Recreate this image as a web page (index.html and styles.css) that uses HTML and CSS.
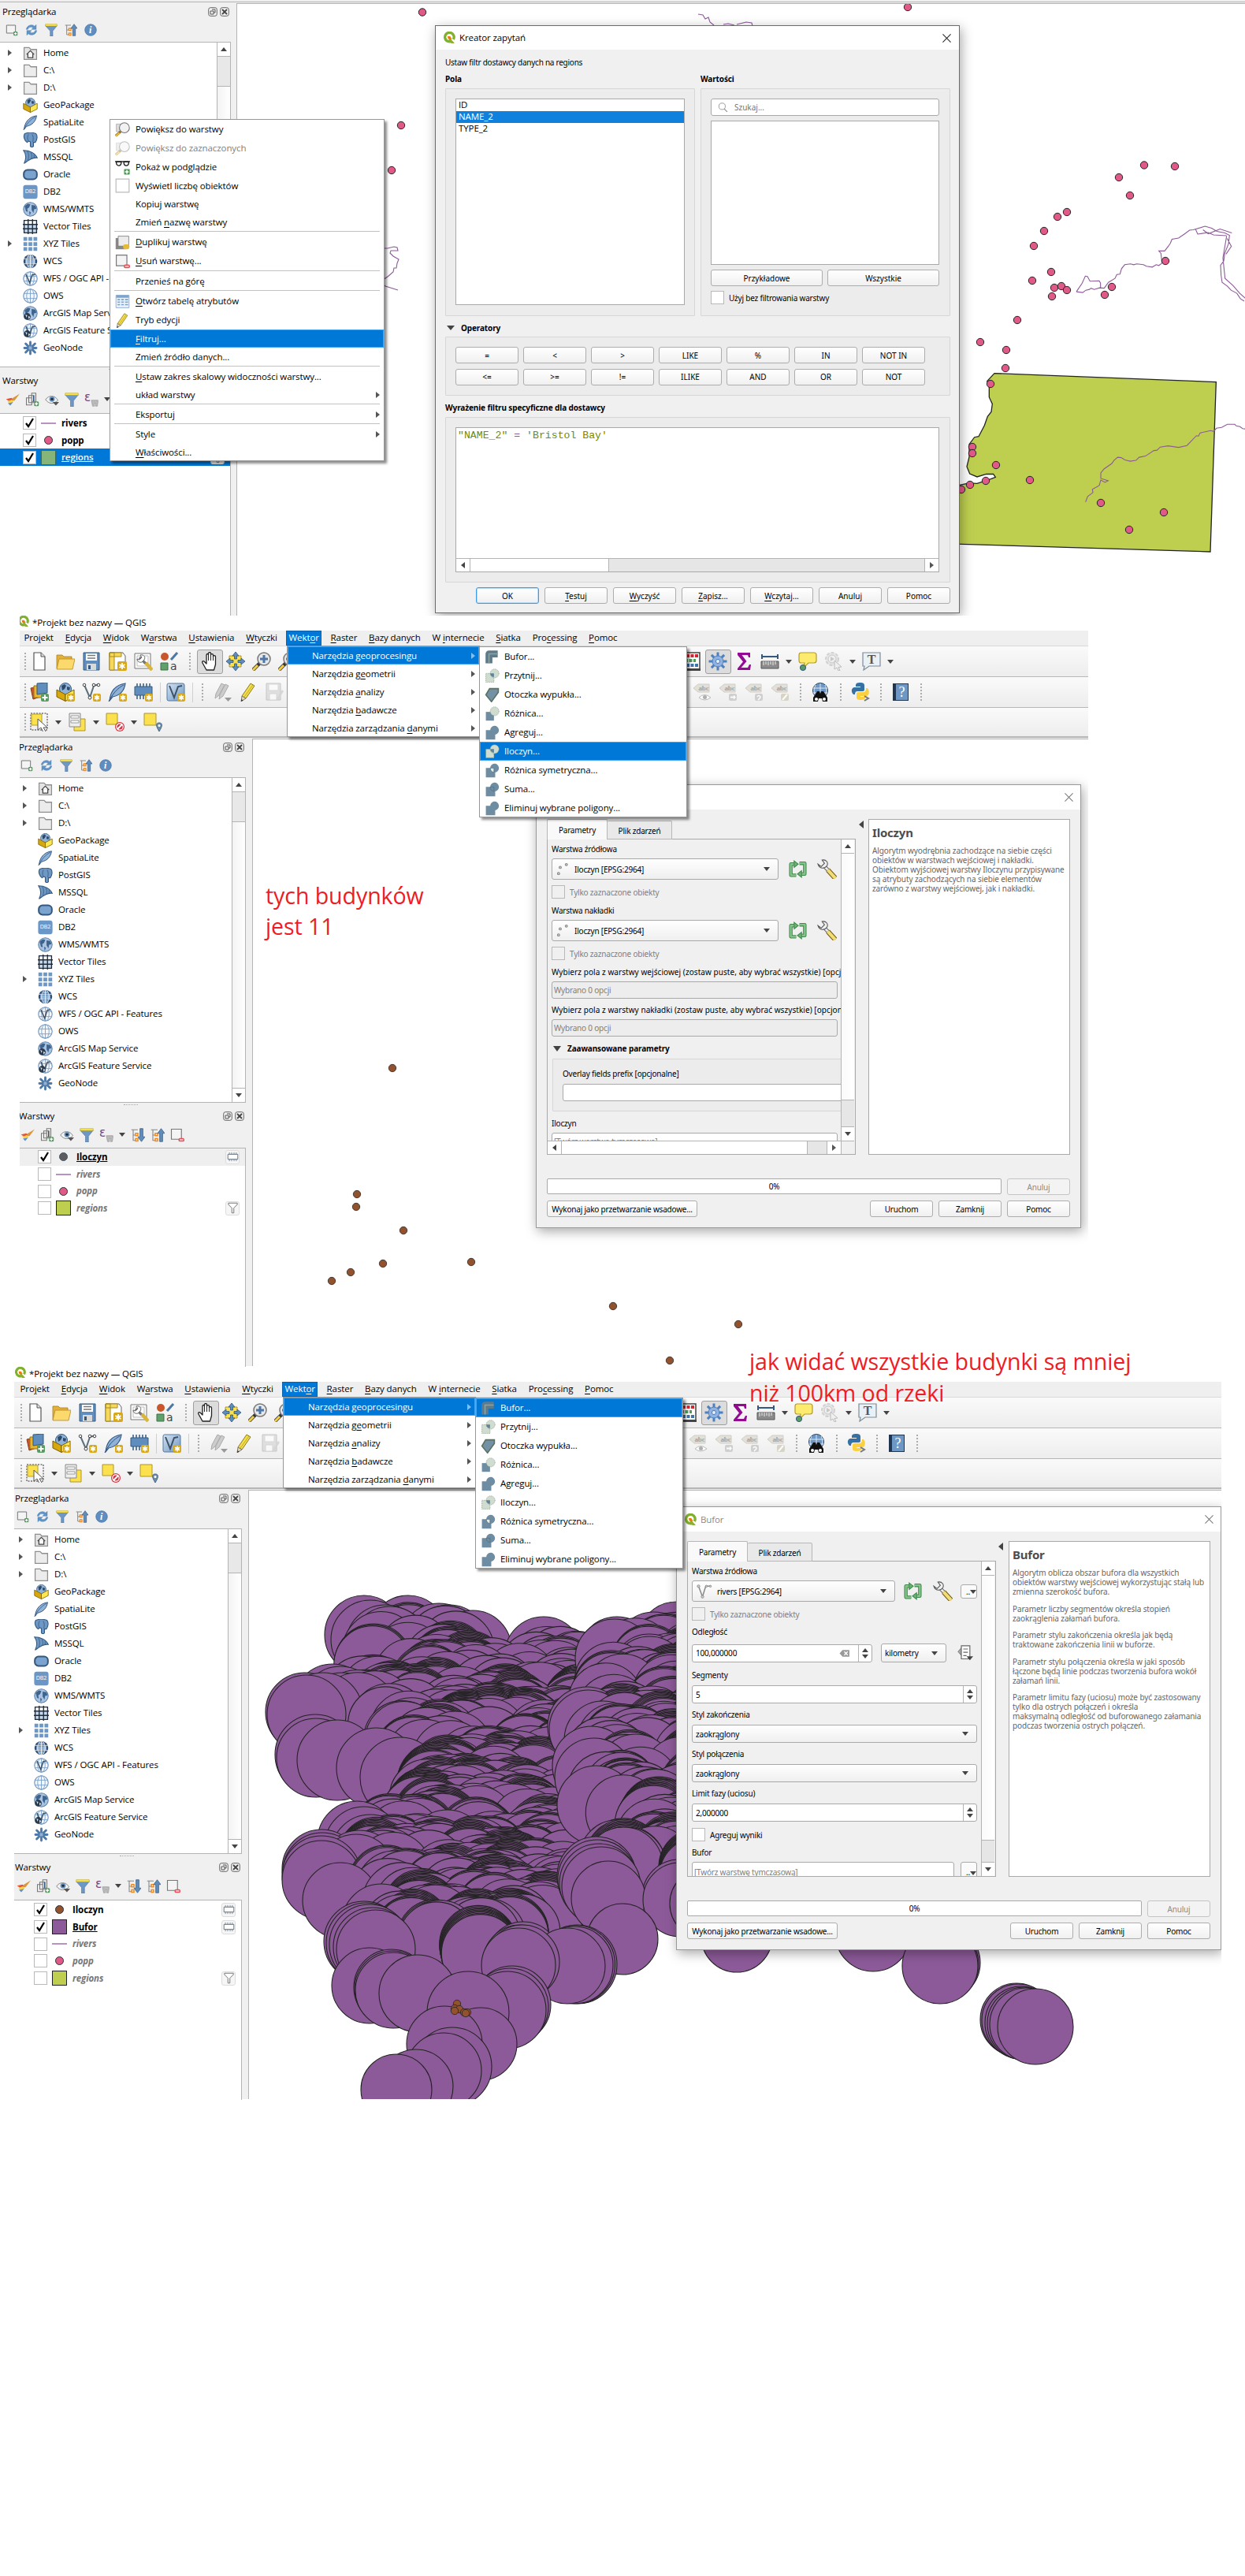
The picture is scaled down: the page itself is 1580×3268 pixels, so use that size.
FILE: index.html
```html
<!DOCTYPE html>
<html lang="pl">
<head>
<meta charset="utf-8">
<title>QGIS – analiza warstw</title>
<link rel="stylesheet" href="styles.css">
</head>
<body>
<svg class="sprite" width="0" height="0" aria-hidden="true">
  <defs>
    <linearGradient id="lg-blue" x1="0" y1="0" x2="1" y2="1"><stop offset="0" stop-color="#d5e3f2"/><stop offset="1" stop-color="#6d97c4"/></linearGradient>
    <symbol id="i-logo" viewBox="0 0 24 24"><path fill="#589632" d="M14 14l8 8h-6l-4-4z"/><path fill="none" stroke="#7fb02e" stroke-width="5" d="M17 18a8.600 8.600 0 1 1 3-3"/><path fill="#ee7913" d="M9 9h5l3 5-2 2-5-2z"/><path fill="#93b023" d="M13 13l9 9h-5l-6-6z"/></symbol>
    <symbol id="i-add" viewBox="0 0 24 24"><path fill="#f4f4f4" stroke="#777" stroke-width="1.500" d="M2 3h17v15H2z"/><rect x="15" y="15" width="8" height="8" rx="2" fill="#5a9a63"/><path stroke="#fff" stroke-width="2" d="M19 16.500v5M16.500 19h5"/></symbol>
    <symbol id="i-refresh" viewBox="0 0 24 24"><path fill="#5f94cb" stroke="#4576a9" stroke-width=".6" d="M2 11C3 3 13 0 18 5l3-3v9h-9l3-3C11 5 6 7 5 11zM22 13c-1 8-11 11-16 6l-3 3v-9h9l-3 3c4 3 9 1 10-3z"/></symbol>
    <symbol id="i-funnel" viewBox="0 0 24 24"><path fill="#6d97c4" stroke="#4b7099" stroke-width=".8" d="M1 4h22l-8 10v10h-5V14z"/><path fill="#fce94f" stroke="#b9a11d" stroke-width=".8" d="M1 1h22v3.500H1z"/></symbol>
    <symbol id="i-up" viewBox="0 0 24 24"><path fill="none" stroke="#888" stroke-width="1.500" d="M1 3h11M4 3v18h4M4 12h4"/><path fill="#fff" stroke="#f08a1c" stroke-width="2" d="M8 9h4v4H8zM8 18h4v4H8z"/><path fill="#5f8dbd" stroke="#35597e" stroke-width="1" d="M18 1l6 8h-3.500v14h-5V9H12z"/></symbol>
    <symbol id="i-down" viewBox="0 0 24 24"><path fill="none" stroke="#888" stroke-width="1.500" d="M1 3h11M4 3v18h4M4 12h4"/><path fill="#fff" stroke="#f08a1c" stroke-width="2" d="M8 9h4v4H8zM8 18h4v4H8z"/><path fill="#5f8dbd" stroke="#35597e" stroke-width="1" d="M18 23l6-8h-3.500V1h-5v14H12z"/></symbol>
    <symbol id="i-info" viewBox="0 0 24 24"><circle cx="12" cy="12" r="11" fill="#5f8dc0" stroke="#456f9e"/><text x="9" y="18" font-family="Liberation Serif" font-style="italic" font-weight="bold" font-size="18" fill="#fff">i</text></symbol>
    <symbol id="i-folder" viewBox="0 0 24 24"><path fill="#ececec" stroke="#8f8f8f" stroke-width="1.600" d="M2 3h8l3 3h9v16H2z"/></symbol>
    <symbol id="i-home" viewBox="0 0 24 24"><path fill="#e4e4e4" stroke="#8f8f8f" stroke-width="1.600" d="M2 3h8l3 3h9v16H2z"/><path fill="#fff" stroke="#444" stroke-width="1.600" d="M6 14l6-6 6 6M8 13v6h8v-6"/></symbol>
    <symbol id="i-gpkg" viewBox="0 0 24 24"><circle cx="12" cy="8" r="7.500" fill="#8fb2d8" stroke="#35597e"/><path fill="#2e4a68" d="M7 4l4-2 2 2-2 4-3 2zM14 5l4 1-1 4-3-1z"/><path fill="#d7a80c" stroke="#7b5d00" d="M1 9l11 6v8.500L1 18z"/><path fill="#fce94f" stroke="#7b5d00" d="M23 9l-11 6v8.500L23 18z"/></symbol>
    <symbol id="i-feather" viewBox="0 0 24 24"><path fill="#8fb2d8" stroke="#2f5580" stroke-width="1.200" d="M2 23C3 12 9 3 22 1c-1 8-6 15-16 17z"/><path fill="none" stroke="#2f5580" d="M1 24C6 14 12 7 20 3"/></symbol>
    <symbol id="i-elephant" viewBox="0 0 24 24"><path fill="#6d97c4" stroke="#35597e" stroke-width="1.400" d="M3 2c5-2 13-2 18 0 3 3 2 10-1 14h-3v6c-1 2-4 2-5 0v-7l-3-1-2 2C3 14 0 6 3 2z"/><path fill="none" stroke="#35597e" d="M9 3c-2 4-2 8 0 11M15 3c2 4 2 7 1 12"/></symbol>
    <symbol id="i-sail" viewBox="0 0 24 24"><path fill="#6d97c4" stroke="#35597e" stroke-width="1.400" d="M1 1c9 0 19 4 22 12-7-1-13 3-21 9 4-8 4-14-1-21z"/><path fill="none" stroke="#35597e" d="M7 2c3 5 3 10 1 15M13 5c2 4 2 7 0 10M18 8v5"/></symbol>
    <symbol id="i-oracle" viewBox="0 0 24 24"><rect x="1.500" y="4.500" width="21" height="15" rx="6" fill="#7aa3d0" stroke="#35597e" stroke-width="2.600"/></symbol>
    <symbol id="i-db2" viewBox="0 0 24 24"><rect x=".5" y="1" width="23" height="22" rx="4" fill="#6a97c8"/><text x="12" y="14.500" text-anchor="middle" font-family="Open Sans" font-size="9" fill="#fff">DB2</text></symbol>
    <symbol id="i-wms" viewBox="0 0 24 24"><circle cx="12" cy="12" r="11" fill="#a9c4e2" stroke="#5b80a8" stroke-width="1.300"/><path fill="#3e648e" d="M3 7l5-4 4 1-2 5-3 2 1 5-3-1zM14 5l6 1 2 5-4 1-1 6-3-5zM10 15l3 2-2 5z"/></symbol>
    <symbol id="i-grid" viewBox="0 0 24 24"><path fill="#fff" d="M2 2h20v20H2z"/><path fill="#c5d7ea" d="M2 9h20v13H2z"/><path fill="none" stroke="#1d2b3c" stroke-width="1.700" d="M2 2h20v20H2zM8.500 0v24M15.500 0v24M0 8.500h24M0 15.500h24"/></symbol>
    <symbol id="i-tiles" viewBox="0 0 24 24"><path fill="#6d97c4" d="M1 1h6v6H1zM9 1h6v6H9zM17 1h6v6h-6zM1 9h6v6H1zM9 9h6v6H9zM17 9h6v6h-6zM1 17h6v6H1zM9 17h6v6H9zM17 17h6v6h-6z"/></symbol>
    <symbol id="i-wcs" viewBox="0 0 24 24"><circle cx="12" cy="12" r="11" fill="#2f4f74"/><path fill="#8fb2d8" d="M4 9h16v6H4zM8 3h8v4H8zM8 17h8v4H8z"/><path fill="none" stroke="#fff" d="M12 1v22M1.500 8h21M1.500 16h21"/><ellipse cx="12" cy="12" rx="6" ry="11" fill="none" stroke="#fff"/></symbol>
    <symbol id="i-ows" viewBox="0 0 24 24"><circle cx="12" cy="12" r="11" fill="#f4f8fc" stroke="#6a93bf" stroke-width="1.400"/><path fill="none" stroke="#7ea3cb" stroke-width="1.200" d="M12 1v22M1.500 8h21M1.500 16h21"/><ellipse cx="12" cy="12" rx="6" ry="11" fill="none" stroke="#7ea3cb" stroke-width="1.200"/></symbol>
    <symbol id="i-wfs" viewBox="0 0 24 24"><use href="#i-ows"/><path fill="none" stroke="#44566a" stroke-width="2" d="M5 5l6 14 4-13 5-1"/></symbol>
    <symbol id="i-agm" viewBox="0 0 24 24"><use href="#i-wms"/><circle cx="7" cy="17" r="5.500" fill="#2b3b4e"/><path fill="#dfe8f2" d="M4 14l3 1-1 4zM9 16l3 2-3 3z"/></symbol>
    <symbol id="i-agf" viewBox="0 0 24 24"><use href="#i-wfs"/><circle cx="7" cy="17" r="5.500" fill="#2b3b4e"/><path fill="#dfe8f2" d="M4 14l3 1-1 4zM9 16l3 2-3 3z"/></symbol>
    <symbol id="i-node" viewBox="0 0 24 24"><path fill="none" stroke="#4f79a8" stroke-width="3.600" stroke-linecap="round" d="M12 2.500v6M12 15.500v6M2.500 12h6M15.500 12h6M4.500 5l4 4M15.500 15l4 4M19.500 5l-4 4M8.500 15l-4 4"/><circle cx="12" cy="12" r="2.500" fill="#8fb2d8"/></symbol>
    <symbol id="i-brush" viewBox="0 0 24 24"><path fill="#d8973b" d="M24 2l-9 12-4-4z"/><path fill="#e8542f" d="M1 11l9-2 4 4-4 5z"/><path fill="#f8d24a" d="M3 15l8-3 3 2-5 6z"/><path fill="#5b90cf" d="M4 18l6-1 3-1-5 6z"/></symbol>
    <symbol id="i-group" viewBox="0 0 24 24"><path fill="#eee" stroke="#777" stroke-width="1.400" d="M2 9h9v12H2zM6 5h9v12H6zM11 1h7v14h-7z"/><path stroke="#35597e" stroke-width="1.500" d="M14 5v10"/><rect x="15" y="15" width="8" height="8" rx="2" fill="#5a9a63"/><path stroke="#fff" stroke-width="2" d="M19 16.500v5M16.500 19h5"/></symbol>
    <symbol id="i-eye" viewBox="0 0 24 24"><path fill="#f2f2f2" stroke="#888" stroke-width="1.300" d="M1 12C6 4 17 4 22 13c-7 7-15 7-21-1z"/><circle cx="12" cy="11" r="4.500" fill="#5f8dbd"/><circle cx="12" cy="11" r="2" fill="#222"/><path fill="#555" d="M13 16h11l-5.500 6z"/></symbol>
    <symbol id="i-eps" viewBox="0 0 24 24"><text x="0" y="15" font-family="DejaVu Sans" font-size="20" fill="#74477f">ε</text><path fill="#bbb" stroke="#999" d="M12 13h11v3l-1 7h-3v-5h-2v5h-3z"/></symbol>
    <symbol id="i-remove" viewBox="0 0 24 24"><path fill="#f4f4f4" stroke="#777" stroke-width="1.500" d="M2 2h17v17H2z"/><rect x="14" y="17" width="10" height="6" rx="2.500" fill="#e5525a"/><path stroke="#fff" stroke-width="1.600" d="M16 20h6"/></symbol>
    <symbol id="i-new" viewBox="0 0 24 24"><path fill="#fff" stroke="#555" stroke-width="1.200" d="M5 1h9l5 5v17H5z"/><path fill="#ddd" stroke="#555" d="M14 1v5h5"/></symbol>
    <symbol id="i-open" viewBox="0 0 24 24"><path fill="#e3b13a" stroke="#a87f1c" stroke-width=".8" d="M1 4h7l2 2h10v15H1z"/><path fill="#fbd96c" stroke="#b58c25" stroke-width=".8" d="M4 9h20l-3 13H1z"/></symbol>
    <symbol id="i-save" viewBox="0 0 24 24"><path fill="#5f8dbd" stroke="#35597e" d="M2 1h20v22H2z"/><path fill="#fff" d="M5 2h14v9H5z"/><path stroke="#777" stroke-width="1.400" d="M7 4.500h10M7 8h10"/><path fill="#d9d9d9" d="M6 15h12v8H6z"/><path fill="#35597e" d="M8 17h3v5H8z"/></symbol>
    <symbol id="i-layout" viewBox="0 0 24 24"><path fill="#fff" stroke="#666" d="M2 1h17l3 4v18H2z"/><path fill="#f6d95b" stroke="#a88b1c" d="M2 1h6v22H2zM2 1h15v5H2z"/><rect x="12" y="12" width="12" height="12" rx="2" fill="#d6a81a"/><path stroke="#fff" stroke-width="1.800" d="M18 14v8M14.500 16l7 4M21.500 16l-7 4"/></symbol>
    <symbol id="i-tools" viewBox="0 0 24 24"><path fill="#fff" stroke="#777" d="M1 2h20v19H1z"/><path fill="none" stroke="#bbb" d="M4 5h14v13H4z"/><path stroke="#777" stroke-width="3.400" d="M7 7l8 8"/><path fill="#fff" stroke="#666" d="M4 9l3 1 3-3-2-3c5-1 7 3 5 6l-3 3c-3 1-6-1-6-4z"/><path stroke="#d9b53a" stroke-width="4.500" d="M15 14l8 9"/></symbol>
    <symbol id="i-style" viewBox="0 0 24 24"><circle cx="6" cy="6" r="5" fill="#c9562c"/><path stroke="#4c77a6" stroke-width="3" d="M22 1l-8 9"/><path fill="#5fa06b" stroke="#3f7149" d="M1 14h9v9H1z"/><text x="13" y="23" font-family="DejaVu Sans" font-size="14" fill="#444">a</text></symbol>
    <symbol id="i-hand" viewBox="0 0 24 24"><path fill="#fff" stroke="#222" stroke-width="1.300" stroke-linejoin="round" d="M8 23l-5-9c-1-2 1-3 2-2l3 3V4c0-2 2.500-2 2.500 0V2c0-2 3-2 3 0v2c0-2 3-1.500 3 0v2c0-2 3-1.500 3 0v10l-2 7z"/><path stroke="#222" d="M10.500 4v7M13.500 4v7M16.500 5v6"/></symbol>
    <symbol id="i-pan" viewBox="0 0 24 24"><path fill="#fbe14d" stroke="#b0962b" d="M4 5h15v14H4z"/><path fill="#5f8dbd" stroke="#35597e" stroke-width=".8" d="M12 0l4 5h-2.500v4h-3V5H8zM12 24l4-5h-2.500v-4h-3v4H8zM0 12l5-4v2.500h4v3H5V16zM24 12l-5-4v2.500h-4v3h4V16z"/></symbol>
    <symbol id="i-zoomin" viewBox="0 0 24 24"><path stroke="#333" stroke-width="4.500" d="M1 23l9-9"/><path stroke="#f2cf45" stroke-width="3" d="M1 23l6-6"/><circle cx="15" cy="9" r="8" fill="#e7e7e7" stroke="#777" stroke-width="1.500"/><path stroke="#4c77a6" stroke-width="3" d="M15 4v10M10 9h10"/></symbol>
    <symbol id="i-zoomout" viewBox="0 0 24 24"><path stroke="#333" stroke-width="4.500" d="M1 23l9-9"/><path stroke="#f2cf45" stroke-width="3" d="M1 23l6-6"/><circle cx="15" cy="9" r="8" fill="#e7e7e7" stroke="#777" stroke-width="1.500"/><path stroke="#4c77a6" stroke-width="3" d="M10 9h10"/></symbol>
    <symbol id="i-abacus" viewBox="0 0 24 24"><path fill="#fff" stroke="#444" stroke-width="1.500" d="M2 1h20v22H2z"/><path stroke="#d3262e" stroke-width="4" stroke-dasharray="4 1.500" d="M5 5h16"/><path stroke="#4f9a58" stroke-width="4" stroke-dasharray="4 1.500" d="M3 11h14"/><path stroke="#4173ab" stroke-width="4" stroke-dasharray="4 1.500" d="M5 17h16"/><path stroke="#444" stroke-width="3" d="M1 22.500h22"/></symbol>
    <symbol id="i-gear" viewBox="0 0 24 24"><g stroke="#4d80bd" stroke-width="3"><path d="M12 .5v23M.5 12h23M3.900 3.900l16.200 16.200M20.100 3.900L3.900 20.100"/></g><circle cx="12" cy="12" r="7" fill="#8fb2e2" stroke="#4d80bd"/><circle cx="12" cy="12" r="2.600" fill="#e7edf5" stroke="#4d80bd"/></symbol>
    <symbol id="i-sigma" viewBox="0 0 24 24"><path fill="#930a93" d="M4 1h16v6h-2l-1-3H9.500l6 8-7 8H17l2-4h2l-1 7H4v-2l7-8.500L4 4z"/></symbol>
    <symbol id="i-ruler" viewBox="0 0 24 24"><path stroke="#35597e" stroke-width="2" d="M2 6h20M2 3v6M22 3v6"/><path fill="#8c8c8c" stroke="#555" d="M1 12h22v9H1z"/><path stroke="#eee" d="M4 12v5M7 12v4M10 12v5M13 12v4M16 12v5M19 12v4"/></symbol>
    <symbol id="i-tip" viewBox="0 0 24 24"><path fill="#fdeb6e" stroke="#b39b29" stroke-width="1.200" d="M4 1h16q3 0 3 3v7q0 3-3 3h-7l-6 6 1-6H4q-3 0-3-3V4q0-3 3-3z"/><circle cx="6" cy="20" r="3.600" fill="#5a9a63" stroke="#35597e"/></symbol>
    <symbol id="i-click" viewBox="0 0 24 24"><g opacity=".6"><circle cx="10" cy="9" r="8" fill="#ddd" stroke="#bbb" stroke-width="2" stroke-dasharray="4 2"/><circle cx="10" cy="9" r="5" fill="#eee" stroke="#aaa"/><path fill="#aaa" d="M8 6l5 3-5 3z"/><path fill="#eee" stroke="#999" d="M13 11l9 8-4 .5 2 4-2 .5-2-4-3 2z"/></g></symbol>
    <symbol id="i-text" viewBox="0 0 24 24"><path fill="#eaf1f6" stroke="#7c8c98" stroke-width="1.200" d="M1 1h22v17H9l-7 5 1-5H1z"/><text x="12" y="15" text-anchor="middle" font-family="Liberation Serif" font-weight="bold" font-size="16" fill="#555">T</text></symbol>
    <symbol id="i-star" viewBox="0 0 24 24"><rect x="14" y="14" width="10" height="10" rx="2" fill="#d6a81a"/><path stroke="#fff" stroke-width="1.600" d="M19 15.500v7M16 17.200l6 3.600M22 17.200l-6 3.600"/></symbol>
    <symbol id="i-source" viewBox="0 0 24 24"><path fill="#c9562c" stroke="#8e3a1a" d="M1 7l9-2 3 13-9 3z"/><path fill="#e8b52c" stroke="#9a7510" d="M5 4h12v15H5z"/><path fill="#5f8dbd" stroke="#35597e" d="M9 1l13-1v13l-13 2z"/><rect x="14" y="14" width="10" height="10" rx="2" fill="#5a9a63"/><path stroke="#fff" stroke-width="2" d="M19 15.500v7M15.500 19h7"/></symbol>
    <symbol id="i-gpkgnew" viewBox="0 0 24 24"><use href="#i-gpkg"/><use href="#i-star"/></symbol>
    <symbol id="i-shpnew" viewBox="0 0 24 24"><path fill="none" stroke="#5c6f7c" stroke-width="2" d="M3 3l7 16 5-15 7-2"/><g fill="#fff" stroke="#444"><circle cx="3" cy="3" r="1.800"/><circle cx="10" cy="19" r="2"/><circle cx="15" cy="3" r="1.800"/><circle cx="21" cy="3" r="1.800"/></g><use href="#i-star"/></symbol>
    <symbol id="i-slnew" viewBox="0 0 24 24"><use href="#i-feather"/><use href="#i-star"/></symbol>
    <symbol id="i-memnew" viewBox="0 0 24 24"><path stroke="#35597e" stroke-width="1.500" d="M4 1v20M8 1v20M12 1v20M16 1v20M20 1v20"/><path fill="#5f8dbd" stroke="#35597e" d="M1 5h22v11H1z"/><use href="#i-star"/></symbol>
    <symbol id="i-virtnew" viewBox="0 0 24 24"><rect x="1" y="1" width="22" height="22" rx="2" fill="url(#lg-blue)" stroke="#5478a0"/><path fill="none" stroke="#3c5166" stroke-width="2" d="M4 4l6 15 5-14 5-1"/><use href="#i-star"/></symbol>
    <symbol id="i-pencils" viewBox="0 0 24 24"><g fill="#ccc" stroke="#aaa"><path d="M3 20l1-6 7-13 4 2-7 13z"/><path d="M8 21l1-6 7-13 4 2-7 13z"/></g><path fill="#999" d="M15 19h9l-4.500 5z"/></symbol>
    <symbol id="i-pencil" viewBox="0 0 24 24"><path fill="#f3dd4c" stroke="#8a7a1e" d="M4 17L15 1l5 3L9 20z"/><path stroke="#c2ab28" d="M7 18L18 3"/><path fill="#e8d6a8" stroke="#777" d="M4 17l5 3-6 4z"/><path fill="#333" d="M3 24l.4-3 2.200 1.400z"/></symbol>
    <symbol id="i-savegrey" viewBox="0 0 24 24"><g opacity=".5"><path fill="#ccc" stroke="#999" d="M2 1h18v21H2z"/><path fill="#fff" stroke="#bbb" d="M5 2h12v8H5zM6 14h9v8H6z"/><path fill="#bbb" d="M14 22l8-13 2 2-8 12z"/></g></symbol>
    <symbol id="i-tag" viewBox="0 0 24 24"><path fill="#dcdad0" stroke="#c3c1b8" d="M1 7l6-5h14v10H7z"/><text x="14" y="10" text-anchor="middle" font-family="Liberation Serif" font-size="9" font-weight="bold" fill="#888">abc</text></symbol>
    <symbol id="i-abcmove" viewBox="0 0 24 24"><g opacity=".75"><use href="#i-tag"/><rect x="13" y="14" width="10" height="9" rx="2" fill="#c4c4c4"/><path fill="#fff" d="M15 17.500h4v-2l3 3-3 3v-2h-4z"/></g></symbol>
    <symbol id="i-abcrot" viewBox="0 0 24 24"><g opacity=".75"><use href="#i-tag"/><rect x="13" y="14" width="10" height="9" rx="2" fill="#c4c4c4"/><path fill="none" stroke="#fff" stroke-width="1.600" d="M16 18q2-3 4 0 0 2-3 4"/></g></symbol>
    <symbol id="i-abcedit" viewBox="0 0 24 24"><g opacity=".75"><use href="#i-tag"/><rect x="13" y="14" width="10" height="9" rx="2" fill="#cfcbb8"/><path stroke="#fff" stroke-width="2" d="M15 22l6-7"/></g></symbol>
    <symbol id="i-abceye" viewBox="0 0 24 24"><g opacity=".75"><use href="#i-tag"/><path fill="#fff" stroke="#aaa" d="M8 19q7-7 15 0-8 6-15 0z"/><circle cx="15.500" cy="18.500" r="2.500" fill="#999"/></g></symbol>
    <symbol id="i-binoc" viewBox="0 0 24 24"><circle cx="12" cy="10" r="9.500" fill="#6d97c4" stroke="#26415f"/><path fill="none" stroke="#dfe9f4" d="M12 1v18M3 7h18M3 13h18M6 3q-4 7 0 14M18 3q4 7 0 14"/><path fill="#111" d="M8 11h3l1 3 1-3h3l5 8v5h-6l-1-4h-4l-1 4H3v-5z"/><circle cx="7" cy="21" r="2" fill="#fff"/><circle cx="17" cy="21" r="2" fill="#fff"/></symbol>
    <symbol id="i-python" viewBox="0 0 24 24"><path fill="#3571a3" d="M11 0c5 0 6 1 6 4v5q0 2-3 2H8q-3 0-3 4H3c-3-3-3-8 1-9h8V5H6V3q0-3 5-3z"/><path fill="#fbd03f" d="M13 22c-5 0-6-1-6-4v-4q0-2 3-2h6q3 0 3-5h2c3 4 2 9-1 10h-8v1h6v1q0 3-5 3z"/><path fill="none" stroke="#777" stroke-width="2" d="M17 17l5 3-5 3"/></symbol>
    <symbol id="i-help" viewBox="0 0 24 24"><path fill="#1f3550" d="M2 1h20v22H2z"/><path fill="#6d97c4" d="M6 2h15v20H6z"/><text x="13.500" y="18" text-anchor="middle" font-family="Liberation Serif" font-size="18" fill="#fff">?</text></symbol>
    <symbol id="i-select" viewBox="0 0 24 24"><path fill="none" stroke="#333" stroke-dasharray="2 1.500" d="M1 1h21v21H1z"/><path fill="#fbe14d" stroke="#b8a12b" d="M2 2h13v14H2z"/><path fill="#fff" stroke="#555" d="M10 8l12 11h-5l3 5-3 1-3-6-4 3z"/></symbol>
    <symbol id="i-form" viewBox="0 0 24 24"><path fill="#fbe14d" stroke="#b0962b" d="M8 8h14v15H8z"/><path fill="#eee" stroke="#888" d="M2 1h14v17H2z"/><path fill="#fff" stroke="#999" d="M4 4h10v3H4zM4 10h10v3H4z"/></symbol>
    <symbol id="i-desel" viewBox="0 0 24 24"><path fill="#fbe14d" stroke="#b0962b" d="M1 1h14v14H1z"/><circle cx="18" cy="18" r="6" fill="#d9333f"/><path stroke="#fff" stroke-width="2" d="M15 21l6-6"/><circle cx="18" cy="18" r="4.200" fill="none" stroke="#fff" stroke-width="1.200"/></symbol>
    <symbol id="i-selloc" viewBox="0 0 24 24"><path fill="#fbe14d" stroke="#b0962b" d="M1 1h15v15H1z"/><path fill="#6d8ca8" stroke="#486680" d="M20 24c-5-8-4-11 0-11s5 3 0 11z"/><circle cx="20" cy="16.500" r="1.500" fill="#fff"/></symbol>
    <symbol id="i-bufor" viewBox="0 0 24 24"><path fill="none" stroke="#5d7b8c" stroke-width="11" stroke-linejoin="round" d="M7 22V7h14"/><path fill="none" stroke="#8fa39a" stroke-width="2" d="M7 22V7h14"/></symbol>
    <symbol id="i-clip" viewBox="0 0 24 24"><path fill="#cfdccf" stroke="#7c9a80" stroke-dasharray="1.500 1.500" d="M2 8h13v14H2z"/><circle cx="16" cy="8" r="7" fill="#cfdccf" stroke="#7c9a80" stroke-dasharray="1.500 1.500"/><path fill="#5f8299" d="M9 8h6v6q-6-1-6-6z"/></symbol>
    <symbol id="i-hull" viewBox="0 0 24 24"><path fill="#7390a5" stroke="#5a7161" stroke-width="2" d="M8 2h14v6L11 23 2 12z"/></symbol>
    <symbol id="i-diff" viewBox="0 0 24 24"><path fill="#6f8da2" d="M2 9h13v14H2z"/><circle cx="16" cy="8" r="7" fill="#cfdccf" stroke="#7c9a80" stroke-dasharray="1.500 1.500"/></symbol>
    <symbol id="i-dissolve" viewBox="0 0 24 24"><path fill="#6f8da2" d="M2 8h7a7 7 0 1 1 8 7v8H2z"/></symbol>
    <symbol id="i-symdiff" viewBox="0 0 24 24"><path fill="#6f8da2" d="M2 8h7a7 7 0 1 1 8 7v8H2z"/><path fill="#e3ebe3" stroke="#50718a" d="M9 8h6v7q-6-1-6-7z"/></symbol>
    <symbol id="i-union" viewBox="0 0 24 24"><path fill="#6f8da2" d="M2 8h7a7 7 0 1 1 8 7v8H2z"/><path fill="none" stroke="#50718a" d="M9 8h6v7q-6-1-6-7z"/></symbol>
    <symbol id="i-mag" viewBox="0 0 24 24"><path fill="#ddd" stroke="#aaa" d="M2 3h12v12H2z"/><path stroke="#8a6d1b" stroke-width="4" d="M1 22l8-7"/><path stroke="#f0bf3a" stroke-width="2.500" d="M1 22l6-5"/><circle cx="15" cy="9" r="8" fill="#f2f2f2" stroke="#777" stroke-width="1.400"/></symbol>
    <symbol id="i-glasses" viewBox="0 0 24 24"><path fill="none" stroke="#111" stroke-width="1.600" d="M0 2.500h24"/><path fill="#fff" stroke="#111" stroke-width="1.600" d="M2 3h8q0 6-4 6T2 3zM14 3h8q0 6-4 6t-4-6z"/><rect x="14.500" y="14.500" width="9" height="9" rx="1" fill="#4f9a58"/><path stroke="#fff" stroke-width="2" d="M19 16v6M16 19h6"/></symbol>
    <symbol id="i-check" viewBox="0 0 24 24"><path fill="#fff" stroke="#bbb" stroke-width="1.500" d="M1.500 1.500h21v21h-21z"/></symbol>
    <symbol id="i-dup" viewBox="0 0 24 24"><path fill="#888" d="M1 5h16v18H1z"/><path fill="#ececec" stroke="#777" d="M5 2h17v16H5z"/><rect x="13" y="15" width="10" height="8" rx="3" fill="#e3bb36"/></symbol>
    <symbol id="i-table" viewBox="0 0 24 24"><path fill="#e9f1fa" stroke="#7ea3cb" d="M1.500 2h21v20h-21z"/><path fill="#7ea3cb" d="M2 2h20v4H2z"/><path stroke="#7ea3cb" stroke-width="2" d="M4 9h4M10 9h4M16 9h5M4 13h4M10 13h4M16 13h5M4 17h4M10 17h4M16 17h5"/></symbol>
    <symbol id="i-cycle" viewBox="0 0 24 24"><g fill="none" stroke-linejoin="round"><path stroke="#3f8a4b" stroke-width="4.200" d="M10 19.500H3.500V6H8M14 5h6.500v13H16"/><path stroke="#86c48c" stroke-width="2.200" d="M10 19.500H3.500V6H8M14 5h6.500v13H16"/></g><path fill="#6fb277" stroke="#3f8a4b" d="M7.500 2l5 4-5 4zM16.500 14l-5 4 5 4z"/></symbol>
    <symbol id="i-wrench" viewBox="0 0 24 24"><path stroke="#666" stroke-width="4.500" d="M7 7l8 8"/><path stroke="#eee" stroke-width="2.500" d="M7 7l8 8"/><path fill="#eee" stroke="#555" d="M1 6l4 3 4-4-3-4c5-1 8 3 6 7-3 4-9 4-11-2z"/><path stroke="#6f5a16" stroke-width="6" d="M13 13l9 10"/><path stroke="#f3dc76" stroke-width="4" d="M13 13l9 10"/></symbol>
    <symbol id="i-points" viewBox="0 0 24 24"><g fill="#ccc" stroke="#888" stroke-width="1.500"><circle cx="4" cy="20" r="2"/><circle cx="7" cy="9" r="2"/><circle cx="18" cy="4" r="2"/></g></symbol>
    <symbol id="i-line" viewBox="0 0 24 24"><path fill="none" stroke="#888" stroke-width="1.800" d="M3 4l6 16 5-16h7"/><g fill="#ccc" stroke="#888"><circle cx="3" cy="4" r="2"/><circle cx="9" cy="20" r="2"/><circle cx="15" cy="4" r="1.500"/><circle cx="21" cy="4" r="1.500"/></g></symbol>
    <symbol id="i-search" viewBox="0 0 24 24"><circle cx="10" cy="9" r="7.500" fill="none" stroke="#888" stroke-width="1.500"/><path stroke="#888" stroke-width="2" d="M15 15l7 7"/></symbol>
    <symbol id="i-def" viewBox="0 0 24 24"><path fill="#aaa" stroke="#666" d="M1 10l6-7v14z"/><path fill="#fff" stroke="#666" stroke-width="1.400" d="M6 1h13v20H6z"/><path stroke="#666" stroke-width="1.400" d="M9 6h7M9 11h7M9 16h5"/><path fill="#444" d="M14 17h10l-5 6z"/></symbol>
    <symbol id="i-clear" viewBox="0 0 24 24"><path fill="#999" d="M0 12l7-8h16v16H7z"/><path stroke="#fff" stroke-width="2.400" d="M11 8l8 8M19 8l-8 8"/></symbol>
    <symbol id="i-chip" viewBox="0 0 24 24"><path stroke="#8793a0" stroke-width="1.600" d="M5 3v18M9.500 3v18M14.500 3v18M19 3v18"/><rect x="2" y="7" width="20" height="10" rx="1" fill="#fff" stroke="#7c8894" stroke-width="1.800"/></symbol>
    <symbol id="i-filt" viewBox="0 0 24 24"><path fill="#fff" stroke="#777" stroke-width="1.600" d="M3 2h18v3l-7 7v10h-4V12L3 5z"/></symbol>
    <symbol id="i-float" viewBox="0 0 12 12"><rect x=".7" y=".7" width="10.600" height="10.600" rx="2.500" fill="none" stroke="#666"/><path fill="none" stroke="#555" d="M5 3h4v4H7M3 5h4v4H3z"/></symbol>
    <symbol id="i-close" viewBox="0 0 12 12"><rect x=".7" y=".7" width="10.600" height="10.600" rx="2.500" fill="none" stroke="#666"/><path stroke="#444" stroke-width="1.800" d="M3 3l6 6M9 3l-6 6"/></symbol>
    <symbol id="i-x" viewBox="0 0 12 12"><path fill="none" stroke="currentColor" stroke-width="1.100" d="M.5.5l11 11M11.500.5l-11 11"/></symbol>
  </defs>
</svg>

<section class="shot shot-filter">
  <div class="workspace">
    <aside class="docks" data-docks="filter"></aside>
    <div class="map">
      <svg viewBox="301 5 1279 776" width="1279" height="776">
        <g transform="translate(1180 0) scale(.33333 .49751)">
          <path class="region" d="M-60 1384L1068 1407 1090 974 246 952 218 972 226 985 226 1013 238 1030 234 1050 220 1062 208 1085 186 1113 170 1115 150 1133 150 1165 141 1190 152 1208 180 1216 215 1209 242 1209 250 1217 230 1222 180 1233 150 1232-60 1260z"/>
          <path class="river" d="M558 744l22-22 12-18 8 1 10 12 35-1 5 6 0 12M558 744l24 2 12-6 14-2 6-3 12 3 20-4 18 1 16-15 25-10 7-10 12-1 6-14 12-10 22-2 12 2 12-2 25 2 12 4 22 2 15-6 10 2 12-6-4-25-8-6 22 0 14-12 8-8 6-10 25-3 22-10 20-10 14-1 45-9 25 5 20 8 30 4 18 6-4 22-14 24-4 20-12 10 2 26 4 18 20 10 14 10 22 8 14 14 14 6M1012 585l8 12 40-4 20 6 50 2M1130 602l-14 56 8 52 30 18 26 20 30 18M1040 586l20 10 45-12 45 10M1132 608l16 20-20 20"/>
          <path class="river" d="M593 1280l8-14 20-10-2-8 26-10 6-14 16 6 12-4-28-6 0-14 12-10 30-14 8-8 14-8 14 1 14 6 20 3 22-2 12-8 24-3 32-14 12-1 12-8 30-3 40 4 32-5 36-25 8 1 6-8 40-6 12 2 10-8 20-2 22-8 28 0 6 4 14 2 10 5 30 2"/>
        </g>
        <path class="river" d="M484 315l8 0 8-2 4 1 1 4-9 0-1 3 4 4 7 4-2 5-1 6-3 0-1 5-7 6-6 4-2 4 5 4 16 5M886 18l6 1 3 5 4-2 2 6 5 4M918 31l6-1 8 2M935 31l12-3 7 1 1 4"/>
        <g class="pt-popp" data-points="536,15.500 509,159 497,216 1152,9 1452,209.500 1491,211 1420,225 1434,248 1342,275 1354,269 1325,293 1312,312 1334,345 1310,356 1338,365 1347,363 1354,368 1335,376 1402,374 1411,364 1479,331 1291,406 1244,434 1277,444 1276,467 1257,487 1234,567 1234,575 1264,590 1251,610 1231,615 1220,621 1307,609 1397,638 1433,672 1477,650"></g>
      </svg>
    </div>
  </div>

  <div class="dialog dlg-query">
    <header class="titlebar"><svg class="logo"><use href="#i-logo"/></svg><span>Kreator zapytań</span><svg class="x"><use href="#i-x"/></svg></header>
    <div class="q-body">
      <p class="q-intro">Ustaw filtr dostawcy danych na regions</p>
      <div class="q-cols">
        <div class="q-col">
          <h4>Pola</h4>
          <div class="group q-fields"><ul class="list ui"><li>ID</li><li class="sel">NAME_2</li><li>TYPE_2</li></ul></div>
        </div>
        <div class="q-col">
          <h4>Wartości</h4>
          <div class="group q-values">
            <div class="search"><svg width="13" height="13"><use href="#i-search"/></svg>Szukaj...</div>
            <div class="list"></div>
            <div class="two"><button>Przykładowe</button><button>Wszystkie</button></div>
            <label class="chk"><i></i>Użyj bez filtrowania warstwy</label>
          </div>
        </div>
      </div>
      <h4 class="q-op"><b class="tri-down"></b>Operatory</h4>
      <div class="group q-ops">
        <button>=</button><button>&lt;</button><button>&gt;</button><button>LIKE</button><button>%</button><button>IN</button><button>NOT IN</button>
        <button>&lt;=</button><button>&gt;=</button><button>!=</button><button>ILIKE</button><button>AND</button><button>OR</button><button>NOT</button>
      </div>
      <h4 class="q-expr-title">Wyrażenie filtru specyficzne dla dostawcy</h4>
      <div class="group q-expr">
        <div class="editor"><code>"NAME_2" <em>=</em> 'Bristol Bay'</code>
          <div class="hscroll"><span class="btn"><b class="tri-left"></b></span><span class="thumb q-thumb"></span><span class="track"></span><span class="btn"><b class="tri-right"></b></span></div>
        </div>
      </div>
      <div class="q-buttons"><button class="focus">OK</button><button><u>T</u>estuj</button><button><u>W</u>yczyść</button><button><u>Z</u>apisz...</button><button><u>W</u>czytaj...</button><button>Anuluj</button><button>Pomoc</button></div>
    </div>
  </div>

  <nav class="menu context ui" data-menu="context"></nav>
</section>

<section class="shot shot-intersect">
  <div data-chrome></div>
  <div class="workspace">
    <aside class="docks" data-docks="intersect"></aside>
    <div class="map">
      <svg viewBox="321 938 1060 796" width="1060" height="796">
        <g class="pt-brown" data-points="498,1355 453,1515 452,1531 512,1561 486,1603 445,1614 421,1625 598,1601 778,1657 937,1680 850,1726"></g>
      </svg>
    </div>
  </div>
  <p class="note note-count">tych budynków<br>jest 11</p>

  <div class="dialog dlg-algo dlg-intersect">
    <header class="titlebar"><svg class="x"><use href="#i-x"/></svg></header>
    <div class="a-body">
      <div class="a-main">
        <div class="a-left">
          <div class="tabs"><span class="on">Parametry</span><span>Plik zdarzeń</span></div>
          <div class="pane">
            <div class="pane-row">
              <div class="form f-intersect">
                <label>Warstwa źródłowa</label>
                <div class="row"><span class="combo src"><svg width="17" height="17"><use href="#i-points"/></svg>Iloczyn [EPSG:2964]<b class="tri-down"></b></span><svg class="ic"><use href="#i-cycle"/></svg><svg class="ic"><use href="#i-wrench"/></svg></div>
                <label class="chk off"><i></i>Tylko zaznaczone obiekty</label>
                <label>Warstwa nakładki</label>
                <div class="row"><span class="combo src"><svg width="17" height="17"><use href="#i-points"/></svg>Iloczyn [EPSG:2964]<b class="tri-down"></b></span><svg class="ic"><use href="#i-cycle"/></svg><svg class="ic"><use href="#i-wrench"/></svg></div>
                <label class="chk off"><i></i>Tylko zaznaczone obiekty</label>
                <label class="long">Wybierz pola z warstwy wejściowej (zostaw puste, aby wybrać wszystkie) [opcjonalne]</label>
                <div class="field off">Wybrano 0 opcji</div>
                <label class="long">Wybierz pola z warstwy nakładki (zostaw puste, aby wybrać wszystkie) [opcjonalne]</label>
                <div class="field off">Wybrano 0 opcji</div>
                <h4><b class="tri-down"></b>Zaawansowane parametry</h4>
                <div class="group adv"><label>Overlay fields prefix [opcjonalne]</label><div class="field"></div></div>
                <label>Iloczyn</label>
                <div class="field out">[Twórz warstwę tymczasową]</div>
              </div>
              <div class="vscroll"><span class="btn"><b class="tri-up"></b></span><span class="thumb"></span><span class="track"></span><span class="btn"><b class="tri-down"></b></span></div>
            </div>
            <div class="hscroll"><span class="btn"><b class="tri-left"></b></span><span class="thumb a-thumb"></span><span class="track"></span><span class="btn"><b class="tri-right"></b></span><span class="corner"></span></div>
          </div>
        </div>
        <div class="splitter"><b class="tri-left"></b></div>
        <article class="help"><h3>Iloczyn</h3><p>Algorytm wyodrębnia zachodzące na siebie części<br>obiektów w warstwach wejściowej i nakładki.<br>Obiektom wyjściowej warstwy Iloczynu przypisywane<br>są atrybuty zachodzących na siebie elementów<br>zarówno z warstwy wejściowej, jak i nakładki.</p></article>
      </div>
      <div class="a-progress"><span class="bar">0%</span><button disabled>Anuluj</button></div>
      <div class="a-buttons"><button class="batch">Wykonaj jako przetwarzanie wsadowe...</button><button>Uruchom</button><button>Zamknij</button><button>Pomoc</button></div>
    </div>
  </div>
  <nav class="menu vector ui" data-menu="vector"></nav>
  <nav class="menu geo ui" data-menu="geo" data-selected="5"></nav>
</section>

<section class="shot shot-buffer">
  <div data-chrome></div>
  <div class="workspace">
    <aside class="docks" data-docks="buffer"></aside>
    <div class="map">
      <svg viewBox="316 1891 1234 773" width="1234" height="773">
        <g class="buffers" id="buffers"></g>
        <g class="pt-brown" data-points="580,2542 577,2548 583,2549 589,2553 593,2553 577,2551 591,2554"></g>
      </svg>
    </div>
  </div>

  <div class="dialog dlg-algo dlg-buffer">
    <header class="titlebar"><svg class="logo"><use href="#i-logo"/></svg><span>Bufor</span><svg class="x"><use href="#i-x"/></svg></header>
    <div class="a-body">
      <div class="a-main">
        <div class="a-left">
          <div class="tabs"><span class="on">Parametry</span><span>Plik zdarzeń</span></div>
          <div class="pane">
            <div class="pane-row">
              <div class="form f-buffer">
                <label>Warstwa źródłowa</label>
                <div class="row"><span class="combo src"><svg width="20" height="20"><use href="#i-line"/></svg>rivers [EPSG:2964]<b class="tri-down"></b></span><svg class="ic"><use href="#i-cycle"/></svg><svg class="ic"><use href="#i-wrench"/></svg><span class="more">..<b class="tri-down"></b></span></div>
                <label class="chk off"><i></i>Tylko zaznaczone obiekty</label>
                <label>Odległość</label>
                <div class="row dist"><span class="spin dist-val">100,000000<svg width="14" height="13"><use href="#i-clear"/></svg><s><b class="tri-up"></b><b class="tri-down"></b></s></span><span class="combo unit">kilometry<b class="tri-down"></b></span><svg width="24" height="20"><use href="#i-def"/></svg></div>
                <label>Segmenty</label>
                <div class="spin">5<s><b class="tri-up"></b><b class="tri-down"></b></s></div>
                <label>Styl zakończenia</label>
                <div class="combo">zaokrąglony<b class="tri-down"></b></div>
                <label>Styl połączenia</label>
                <div class="combo">zaokrąglony<b class="tri-down"></b></div>
                <label>Limit fazy (uciosu)</label>
                <div class="spin">2,000000<s><b class="tri-up"></b><b class="tri-down"></b></s></div>
                <label class="chk agg"><i></i>Agreguj wyniki</label>
                <label>Bufor</label>
                <div class="row out"><span class="field">[Twórz warstwę tymczasową]</span><span class="more">..<b class="tri-down"></b></span></div>
              </div>
              <div class="vscroll"><span class="btn"><b class="tri-up"></b></span><span class="thumb"></span><span class="track"></span><span class="btn"><b class="tri-down"></b></span></div>
            </div>
          </div>
        </div>
        <div class="splitter"><b class="tri-left"></b></div>
        <article class="help"><h3>Bufor</h3>
          <p>Algorytm oblicza obszar bufora dla wszystkich<br>obiektów warstwy wejściowej wykorzystując stałą lub<br>zmienna szerokość bufora.</p>
          <p>Parametr liczby segmentów określa stopień<br>zaokrąglenia załamań bufora.</p>
          <p>Parametr stylu zakończenia określa jak będą<br>traktowane zakończenia linii w buforze.</p>
          <p>Parametr stylu połączenia określa w jaki sposób<br>łączone będą linie podczas tworzenia bufora wokół<br>załamań linii.</p>
          <p>Parametr limitu fazy (uciosu) może być zastosowany<br>tylko dla ostrych połączeń i określa<br>maksymalną odległość od buforowanego załamania<br>podczas tworzenia ostrych połączeń.</p></article>
      </div>
      <div class="a-progress"><span class="bar">0%</span><button disabled>Anuluj</button></div>
      <div class="a-buttons"><button class="batch">Wykonaj jako przetwarzanie wsadowe...</button><button>Uruchom</button><button>Zamknij</button><button>Pomoc</button></div>
    </div>
  </div>
  <nav class="menu vector ui" data-menu="vector"></nav>
  <nav class="menu geo ui" data-menu="geo" data-selected="0"></nav>
</section>
<p class="note note-distance">jak widać wszystkie budynki są mniej<br>niż 100km od rzeki</p>
<script src="script.js"></script>
</body>
</html>
```

FILE: styles.css
```css
* { box-sizing: border-box; }
body { margin: 0; width: 1580px; height: 3268px; position: relative; background: #fff; color: #000; font: 10px/12px "Noto Sans", "Open Sans", sans-serif; letter-spacing: -.2px; white-space: nowrap; overflow-x: hidden; }
p, h3, h4, ul { margin: 0; padding: 0; }
svg { display: block; flex: none; }
.sprite { position: absolute; }
.ui, .docks, .menubar, .apptitle, .titlebar { font: 11.500px/14px "Open Sans", "Noto Sans", sans-serif; letter-spacing: -.1px; }
u { text-underline-offset: 1.500px; }

.shot { position: relative; overflow: hidden; background: #fff; }
.shot-filter { height: 781px; border-top: 2px solid #efefef; }
.shot-intersect { margin-left: 25px; width: 1356px; height: 953px; }
.shot-buffer { margin-left: 18px; width: 1532px; height: 930px; }
.workspace { display: flex; border-top: 1px solid #b4b4b4; background: #f0f0f0; height: 779px; }
.shot-intersect .workspace { height: 798px; }
.shot-buffer .workspace { height: 775px; }
.docks { width: 300px; flex: none; }
.shot-intersect .docks { width: 301px; margin-left: -6px; }
.shot-buffer .docks { width: 301px; margin-left: -4px; }
.map { flex: 1; margin-top: 1px; border: solid #b4b4b4; border-width: 1px 0 0 1px; background: #fff; overflow: hidden; }

/* arrows */
.tri-down, .tri-up, .tri-left, .tri-right { display: block; flex: none; width: 0; height: 0; border: 4.500px solid transparent; }
.tri-down { border-top: 5px solid #444; border-bottom: 0; }
.tri-up { border-bottom: 5px solid #444; border-top: 0; }
.tri-left { border-right: 5px solid #444; border-left: 0; }
.tri-right { border-left: 5px solid #555; border-right: 0; }

/* docks */
.dock-title { display: flex; align-items: center; height: 23px; padding: 0 2px 0 3px; width: 293px; gap: 3px; }
.shot-intersect .dock-title, .shot-buffer .dock-title { padding-left: 5px; }
.dock-title span { flex: 1; }
.dock-tools { display: flex; align-items: center; height: 27px; padding: 0 0 3px 7px; gap: 9px; }
.tree { display: flex; width: 293px; height: 413px; border: 1px solid #b4b4b4; border-left: 0; background: #fff; }
.tree-rows { flex: 1; padding-top: 2px; }
.tree-row { display: flex; align-items: center; height: 22px; padding-left: 10px; }
.tree-row .tri-right { margin-right: 14px; }
.tree-row .none { width: 19px; }
.tree-row svg { margin-right: 7px; }
.docks-gap { height: 5px; width: 293px; display: flex; justify-content: center; align-items: center; }
.docks-gap::after { content: ""; width: 18px; border-top: 1px dotted #aaa; }
.dock-tools.layers-tools { height: 30px; padding-bottom: 5px; gap: 7px; }
.layers { width: 293px; height: 400px; border: 1px solid #b4b4b4; border-left: 0; background: #fff; padding-top: 1px; }
.shot-intersect .layers { padding-top: 0; margin-top: -1px; }
.layer { display: flex; align-items: center; height: 21.700px; padding: 0 7px 0 29px; font-weight: bold; }
.layer .box, .chk i { width: 17px; height: 17px; border: 1px solid #b9b9b9; background: #fff; flex: none; }
.layer .box { margin-right: 6px; }
.layer .box svg { width: 15px; height: 15px; }
.layer .sym { width: 19px; height: 19px; margin-right: 7px; display: flex; align-items: center; justify-content: center; }
.layer .name { flex: 1; }
.layer .ind { width: 18px; height: 18px; border: 1px solid #ddd; border-radius: 3px; background: #f6f6f6; display: flex; align-items: center; justify-content: center; }
.layer.off { font-style: italic; color: #777; }
.layer.active .name { text-decoration: underline; }
.layer.hl { background: #efefef; }
.layer.sel { background: #0078d7; color: #fff; font-weight: 600; }
.sym-line { width: 19px; height: 2px; background: #b792c2; }
.sym-dot { width: 11px; height: 11px; border: 1px solid #333; border-radius: 50%; background: #e15989; }
.sym-dot.brown { background: #91522d; }
.sym-dot.slate { background: #5f5c60; border-color: #44586c; }
.sym-fill { width: 19px; height: 19px; border: 1px solid #222; background: #becf50; }
.sym-fill.green { background: #85b579; border-color: #3e6f55; }
.sym-fill.purple { background: #8d5a99; }

/* scrollbars */
.vscroll { width: 17px; display: flex; flex-direction: column; border-left: 1px solid #b4b4b4; background: #fff; }
.vscroll .btn { height: 17px; display: flex; align-items: center; justify-content: center; background: #fff; }
.vscroll .thumb { background: linear-gradient(90deg, #fafafa, #fff); border: solid #b4b4b4; border-width: 1px 0; }
.vscroll .track { flex: 1; background: #e6e6e6; border-bottom: 1px solid #b4b4b4; }
.tree .vscroll .thumb { height: 39px; background: #e8e8e8; }
.tree .vscroll .track { background: linear-gradient(90deg, #f3f3f3, #fff); }
.hscroll { height: 17px; display: flex; border-top: 1px solid #b4b4b4; background: #fff; }
.hscroll .btn { width: 17px; display: flex; align-items: center; justify-content: center; }
.hscroll .thumb { background: #fff; border: solid #b4b4b4; border-width: 0 1px; }
.hscroll .track { flex: 1; background: #e6e6e6; border-right: 1px solid #b4b4b4; }

/* application chrome */
.apptitle { display: flex; align-items: center; height: 19px; gap: 4px; }
.apptitle svg { width: 15px; height: 15px; margin-left: -3px; margin-top: -4px; }
.apptitle span { margin-top: -2px; }
.shot-buffer .apptitle svg { margin-left: 0; }
.menubar { display: flex; height: 20px; background: #efefef; border-bottom: 1px solid #d9d9d9; align-items: stretch; }
.menubar span { padding: 2px 3.500px; margin: 0 3.900px; }
.menubar span:first-child { margin-left: 2px; }
.shot-buffer .menubar span:first-child { margin-left: 4px; }
.menubar .open { background: #0078d7; color: #fff; box-shadow: inset 0 0 0 1px #0c62ad; }
.toolbar { display: flex; align-items: center; height: 39px; padding-left: 8.500px; border-bottom: 1px solid #b7b7b7; background: linear-gradient(#fafafa, #ededed); }
.shot-buffer .toolbar { padding-left: 10.500px; }
.toolbar.last { height: 37px; }
.toolbar .slot { width: 33px; height: 31px; display: flex; align-items: center; justify-content: center; flex: none; }
.toolbar .slot svg { width: 24px; height: 24px; }
.toolbar .slot.on { background: #dcdcdc; border: 1px solid #9f9f9f; border-radius: 3px; }
.toolbar .arrow { width: 15px; display: flex; justify-content: center; flex: none; }
.toolbar .handle { flex: none; width: 18px; height: 24px; background: radial-gradient(circle, #aaa .7px, transparent 1px) 50% 0 / 4px 4px; background-clip: content-box; padding: 0 6px; }
.toolbar .handle.first { margin-left: -11px; margin-right: -7px; }
.toolbar .vsep { width: 8px; height: 25px; flex: none; border-left: 1px solid #cfcfcf; margin-left: 4px; margin-right: -4px; }

/* menus */
.menu { position: absolute; background: #fff; border: 1px solid #979797; box-shadow: 3px 3px 3px rgba(0,0,0,.45); z-index: 3; }
.mi { display: flex; align-items: center; height: 23px; padding-right: 5px; }
.mi span { flex: 1; }
.mi svg { width: 19px; height: 19px; margin-left: 6px; margin-right: 7px; }
.mi.plain { padding-left: 32px; }
.mi.tall { height: 24px; }
.mi.sel { background: #0078d7; color: #fff; box-shadow: inset 0 0 0 1px #3da5f5; }
.mi.sel .tri-right { border-left-color: #7fc0f5; }
.mi.dis { color: #808080; }
.mi.dis svg { opacity: .45; }
.menu hr { margin: 0 5px; height: 2px; border: 0; border-top: 1px solid #c2c2c2; }
.context { left: 139px; top: 149px; width: 349px; height: 434px; }
.vector { width: 245px; height: 116px; }
.shot-intersect .vector { left: 339px; top: 38px; }
.shot-buffer .vector { left: 341px; top: 38px; }
.vector .mi.plain { padding-left: 31px; }
.geo { width: 264px; height: 217px; }
.shot-intersect .geo { left: 583px; top: 39px; }
.shot-buffer .geo { left: 585px; top: 39px; }
.geo .mi { height: 24px; }
.geo .mi svg { margin-right: 6px; }

/* dialogs */
.dialog { position: absolute; background: #f0f0f0; border: 1px solid #999; box-shadow: 2px 4px 14px rgba(0,0,0,.35); z-index: 2; }
.titlebar { height: 31px; background: #fff; display: flex; align-items: center; padding: 0 9px; gap: 5px; }
.titlebar .logo { width: 16px; height: 16px; }
.titlebar .x { width: 11px; height: 11px; margin-left: auto; color: #222; margin-right: 1px; }
button { font: inherit; letter-spacing: inherit; color: #000; height: 21px; padding: 0; border: 1px solid #adadad; border-radius: 3px; background: linear-gradient(#fff, #f0f0f0); white-space: nowrap; }
button:disabled { color: #8c8c8c; border-color: #c4c4c4; background: #f3f3f3; }
button.focus { border-color: #3b9be8; box-shadow: inset 0 0 0 1px #b7dcf8; }
.group { border: 1px solid #d6d6d6; background: #ececec; border-radius: 1px; }
h4 { font: bold 10px/12px "Noto Sans", sans-serif; letter-spacing: -.12px; display: flex; align-items: center; }
.list { background: #fff; border: 1px solid #a9a9a9; list-style: none; }
.chk { display: flex; align-items: center; gap: 6px; height: 17px; }
.chk.off { color: #808080; }
.chk.off i { background: #f0f0f0; }

.dlg-query { left: 552px; top: 30px; width: 666px; height: 746px; border-color: #6b6b6b; }
.dlg-query .titlebar { height: 30px; }
.dlg-query button, .search { letter-spacing: 0; }
.q-body { padding: 10px 11px 0 12px; }
.q-intro { height: 20px; letter-spacing: -.25px; }
.q-cols { display: flex; gap: 7px; }
.q-col { width: 317px; }
.q-col h4 { height: 13px; margin-bottom: 6px; }
.q-col .group { height: 289px; padding: 12px; }
.q-fields .list { height: 262px; width: 291px; }
.q-fields li { height: 15px; line-height: 14px; padding-left: 3px; }
.q-fields .sel { background: #0f80dc; color: #fff; }
.search { height: 22px; width: 290px; display: flex; align-items: center; gap: 8px; padding-left: 8px; background: #fff; border: 1px solid #a9a9a9; border-radius: 3px; color: #777; }
.q-values .list { width: 290px; height: 183px; margin: 6px 0; }
.two { display: grid; grid-template-columns: 1fr 1fr; gap: 6px; width: 290px; margin-bottom: 6px; }
.q-op { height: 26px; gap: 8px; padding: 3px 0 0 2px; }
.q-op .tri-down { border-width: 6px 5.500px 0; }
.q-ops { display: grid; grid-template-columns: repeat(7, 80px); gap: 6px; padding: 12px; height: 75px; }
.q-expr-title { height: 27px; padding-top: 2px; }
.q-expr { height: 210px; padding: 12px; margin-bottom: 6px; }
.editor { height: 184px; width: 614px; border: 1px solid #a9a9a9; background: #fff; display: flex; flex-direction: column; justify-content: space-between; }
.editor code { font: 13.200px/20px "Liberation Mono", monospace; color: #718c00; padding-left: 2px; letter-spacing: 0; }
.editor em { font-style: normal; color: #8959a8; }
.q-thumb { width: 177px; }
.q-buttons { display: flex; gap: 7px; justify-content: flex-end; }
.q-buttons button { width: 80px; }

.dlg-algo { width: 692px; height: 563px; }
.dlg-intersect { left: 655px; top: 214px; }
.dlg-buffer { left: 840px; top: 177px; }
.dlg-algo .titlebar { color: #8a8a8a; }
.dlg-algo .x { color: #777; margin-right: 0; }
.a-body { padding: 12px 13px 0; }
.a-main { display: flex; height: 426px; }
.a-left { width: 392px; display: flex; flex-direction: column; }
.tabs { display: flex; align-items: flex-end; height: 26px; margin-bottom: -1px; position: relative; z-index: 1; }
.tabs span { height: 24px; width: 82px; text-align: center; padding-top: 6px; border: 1px solid #b7b7b7; border-left: 0; background: #e9e9e9; border-radius: 2px 2px 0 0; }
.tabs .on { height: 26px; width: 77px; padding-top: 7px; background: #f9f9f9; border-left: 1px solid #b7b7b7; border-bottom: 0; }
.pane { flex: 1; border: 1px solid #a9a9a9; display: flex; flex-direction: column; overflow: hidden; min-height: 0; padding-right: 1px; }
.pane-row { flex: 1; display: flex; min-height: 0; }
.form { flex: 1; min-width: 0; overflow: hidden; padding-left: 5px; display: flex; flex-direction: column; }
.form > * { flex: none; }
.form > label { display: flex; align-items: center; height: 16px; }
.form > .chk { height: 17px; }
.row { display: flex; align-items: center; }
.combo, .field, .spin { display: flex; align-items: center; height: 23px; border: 1px solid #a9a9a9; border-radius: 3px; padding-left: 4px; background: linear-gradient(#fff, #efefef); }
.combo .tri-down { margin-left: auto; margin-right: 10px; }
.combo.src { width: 288px; height: 27px; gap: 6px; padding-left: 5px; }
.ic { width: 25px; height: 25px; }
.field, .spin { background: #fff; }
.field { height: 22px; color: #808080; padding-left: 2px; }
.field.off { background: #ededed; }
.spin s { width: 17px; height: 100%; border-left: 1px solid #b4b4b4; display: flex; flex-direction: column; gap: 3px; align-items: center; justify-content: center; margin-left: auto; }
.spin svg { margin-left: auto; margin-right: 10px; }
.spin svg + s { margin-left: 0; }
.splitter { width: 16px; padding: 2px 0 0 4px; }
.splitter .tri-left { border-width: 5.500px 6px 5.500px 0; }
.help { width: 256px; background: #fff; border: 1px solid #a9a9a9; padding: 7px 4px; color: #666; letter-spacing: -.1px; }
.help h3 { font: bold 15px/18px "Noto Sans", sans-serif; color: #4d4d4d; margin-bottom: 8px; letter-spacing: -.2px; }
.help p { margin-bottom: 9.500px; }
.a-progress { display: flex; gap: 7px; margin-top: 30px; }
.bar { width: 577px; height: 20px; display: flex; align-items: center; justify-content: center; background: #fff; border: 1px solid #a9a9a9; border-radius: 2px; }
.a-progress button, .a-buttons button { width: 80px; }
.a-buttons { display: flex; gap: 7px; margin-top: 7px; }
.a-buttons .batch { width: 191px; margin-right: auto; }
.more { width: 21px; height: 18px; border: 1px solid #a9a9a9; border-radius: 3px; background: #fafafa; display: flex; align-items: center; justify-content: flex-end; margin-left: auto; }
.more .tri-down { margin-top: 2px; }

.f-intersect > label { margin-top: 3px; height: 17px; }
.f-intersect > .long { letter-spacing: .06px; }
.f-intersect .row { gap: 12px; margin-top: 4px; }
.f-intersect > .chk { margin: 7px 0 3px; }
.f-intersect > .field { margin: 4px 4px 2px 0; width: 363px; }
.f-intersect h4 { height: 26px; gap: 8px; padding-left: 2px; }
.f-intersect h4 .tri-down { border-width: 7px 5px 0; }
.adv { height: 67px; margin: 0 -2px 3px 1px; padding: 12px 0 0 12px; }
.adv label { display: block; margin-bottom: 7px; }
.adv .field { margin-right: -4px; }
.f-intersect + .vscroll .thumb { height: 314px; }
.dlg-intersect .a-thumb { width: 313px; }
.dlg-intersect .hscroll .corner { width: 17px; background: #f0f0f0; border-left: 1px solid #b4b4b4; }
.dlg-buffer .splitter { padding-left: 3px; }
.f-buffer > .combo, .f-buffer > .spin { width: 362px; }
.f-buffer > label { margin-top: 4px; }
.f-buffer .row { width: 362px; }
.f-buffer .combo.src { width: 258px; margin-right: 10px; }
.f-buffer .ic + .ic { margin-left: 13px; }
.f-buffer > .row { margin-top: 4px; }
.f-buffer > .chk { margin-top: 7px; margin-bottom: 2px; }
.f-buffer > .row.dist { margin-top: 7px; height: 24px; }
.dist-val { width: 229px; margin-right: 11px; }
.f-buffer .unit { width: 83px; height: 24px; margin-right: 12px; }
.f-buffer .row.dist + label { margin-top: 8px; }
.f-buffer > .spin { margin-top: 5px; }
.f-buffer > .spin + label { margin-top: 6px; }
.f-buffer > .combo { margin-top: 5px; }
.f-buffer > .combo + label { margin-top: 6px; }
.f-buffer > .chk.agg { margin-top: 8px; margin-bottom: 2px; }
.row.out { align-items: flex-start; }
.f-buffer .row.out .field { width: 333px; height: 26px; }
.row.out .more { height: 26px; }
.f-buffer + .vscroll .thumb { height: 337px; }

/* map symbols */
.region { fill: #becf50; stroke: #232323; stroke-width: 1.300; vector-effect: non-scaling-stroke; }
.river { fill: none; stroke: #8d5a99; stroke-width: 1.100; vector-effect: non-scaling-stroke; }
.pt-popp circle { fill: #e15989; stroke: #232323; }
.pt-brown circle { fill: #91522d; stroke: #232323; stroke-width: .8; }
.buffers circle { fill: #8d5a99; stroke: #232323; stroke-width: 1.100; }

.note { position: absolute; color: #ee1c24; font: 28.600px/39px "Open Sans", "Noto Sans", sans-serif; letter-spacing: -.1px; z-index: 4; }
.note-count { left: 312px; top: 335px; }
.note-distance { left: 951px; top: 1707px; line-height: 40px; }
```

FILE: script.js
```javascript
const icon = (name, size) => `<svg width="${size}" height="${size}"><use href="#i-${name}"/></svg>`;
const accel = (text) => text.replace(/&(.)/, '<u>$1</u>');

/* ---- docks ---- */
const sources = [
  ['home', 'Home', 1], ['folder', 'C:\\', 1], ['folder', 'D:\\', 1], ['gpkg', 'GeoPackage'],
  ['feather', 'SpatiaLite'], ['elephant', 'PostGIS'], ['sail', 'MSSQL'], ['oracle', 'Oracle'],
  ['db2', 'DB2'], ['wms', 'WMS/WMTS'], ['grid', 'Vector Tiles'], ['tiles', 'XYZ Tiles', 1],
  ['wcs', 'WCS'], ['wfs', 'WFS / OGC API - Features'], ['ows', 'OWS'],
  ['agm', 'ArcGIS Map Service'], ['agf', 'ArcGIS Feature Service'], ['node', 'GeoNode'],
];
const symLine = '<i class="sym-line"></i>';
const dot = (c) => `<i class="sym-dot ${c}"></i>`;
const fill = (c) => `<i class="sym-fill ${c}"></i>`;
const layerSets = {
  filter: [['rivers', symLine, 'on'], ['popp', dot(''), 'on'], ['regions', fill('green'), 'on sel active', 'filt']],
  intersect: [['Iloczyn', dot('slate'), 'on hl active', 'chip'], ['rivers', symLine, 'off'], ['popp', dot(''), 'off'], ['regions', fill(''), 'off', 'filt']],
  buffer: [['Iloczyn', dot('brown'), 'on', 'chip'], ['Bufor', fill('purple'), 'on active', 'chip'], ['rivers', symLine, 'off'], ['popp', dot(''), 'off'], ['regions', fill(''), 'off', 'filt']],
};
const tick = '<svg viewBox="0 0 15 15"><path d="M3 8l3 4 6-10" fill="none" stroke="#000" stroke-width="2.200"/></svg>';
const dockTitle = (t) => `<div class="dock-title"><span>${t}</span>${icon('float', 12)}${icon('close', 12)}</div>`;

document.querySelectorAll('[data-docks]').forEach((el) => {
  const rows = sources.map(([ic, name, open]) =>
    `<div class="tree-row">${open ? '<b class="tri-right"></b>' : '<b class="none"></b>'}${icon(ic, 19)}<span>${name}</span></div>`).join('');
  const layers = layerSets[el.dataset.docks].map(([name, sym, cls, ind]) =>
    `<div class="layer ${cls}"><span class="box">${cls.startsWith('on') ? tick : ''}</span><span class="sym">${sym}</span><span class="name"><span>${name}</span></span>${ind ? `<span class="ind">${icon(ind, 15)}</span>` : ''}</div>`).join('');
  el.innerHTML = dockTitle('Przeglądarka') +
    `<div class="dock-tools">${['add', 'refresh', 'funnel', 'up', 'info'].map((i) => icon(i, 16)).join('')}</div>` +
    `<div class="tree"><div class="tree-rows">${rows}</div><div class="vscroll"><span class="btn"><b class="tri-up"></b></span><span class="thumb"></span><span class="track"></span><span class="btn"><b class="tri-down"></b></span></div></div>` +
    '<div class="docks-gap"></div>' + dockTitle('Warstwy') +
    `<div class="dock-tools layers-tools">${['brush', 'group', 'eye', 'funnel', 'eps'].map((i) => icon(i, 18)).join('')}<b class="tri-down"></b>${['down', 'up', 'remove'].map((i) => icon(i, 18)).join('')}</div>` +
    `<div class="layers">${layers}</div>`;
});

/* ---- menu bar and toolbars ---- */
const slot = (i) => `<span class="slot">${icon(i, 24)}</span>`;
const slotOn = (i) => `<span class="slot on">${icon(i, 24)}</span>`;
const arrow = '<span class="arrow"><b class="tri-down"></b></span>';
const handle = '<i class="handle"></i>';
const first = '<i class="handle first"></i>';
const vsep = '<i class="vsep"></i>';
const gap = (w) => `<i style="flex:none;width:${w}px"></i>`;
document.querySelectorAll('[data-chrome]').forEach((el) => {
  const bar = ['Pro&jekt', '&Edycja', '&Widok', 'W&arstwa', '&Ustawienia', '&Wtyczki', 'Wekt&or', '&Raster', '&Bazy danych', 'W &internecie', '&Siatka', 'Pro&cessing', '&Pomoc'];
  el.innerHTML = `<div class="apptitle">${icon('logo', 15)}<span>*Projekt bez nazwy — QGIS</span></div>` +
    `<div class="menubar">${bar.map((m, i) => `<span class="${i === 6 ? 'open' : ''}">${accel(m)}</span>`).join('')}</div>` +
    `<div class="toolbar">${first}${['new', 'open', 'save', 'layout', 'tools', 'style'].map(slot).join('')}${handle}${slotOn('hand')}${slot('pan')}${slot('zoomin')}${slot('zoomout')}${gap(480)}${slot('abacus')}${slotOn('gear')}${slot('sigma')}${slot('ruler')}${arrow}${slot('tip')}${slot('click')}${arrow}${slot('text')}${arrow}</div>` +
    `<div class="toolbar">${first}${['source', 'gpkgnew', 'shpnew', 'slnew', 'memnew'].map(slot).join('')}${vsep}${slot('virtnew')}${vsep}${handle}${slot('pencils')}${slot('pencil')}${slot('savegrey')}${gap(510)}${['abceye', 'abcmove', 'abcrot', 'abcedit'].map(slot).join('')}${handle}${slot('binoc')}${handle}${slot('python')}${handle}${slot('help')}${handle}</div>` +
    `<div class="toolbar last">${first}${slot('select')}${arrow}${slot('form')}${arrow}${slot('desel')}${arrow}${slot('selloc')}</div>`;
});

/* ---- menus: [label, icon, flags] ---- */
const menus = {
  context: [
    ['Powiększ do warstwy', 'mag'], ['Powiększ do zaznaczonych', 'mag', 'dis'], ['Pokaż w podglądzie', 'glasses'],
    ['Wyświetl liczbę obiektów', 'check', 'short'], ['Kopiuj warstwę'], ['Zmień &nazwę warstwy'], null,
    ['&Duplikuj warstwę', 'dup'], ['&Usuń warstwę...', 'remove'], null, ['Przenieś na górę'], null,
    ['&Otwórz tabelę atrybutów', 'table'], ['Tryb edycji', 'pencil'], ['&Filtruj...', '', 'sel'], ['Zmień źródło danych...'], null,
    ['&Ustaw zakres skalowy widoczności warstwy...'], ['układ warstwy', '', 'sub'], null, ['Eksportuj', '', 'sub'], null,
    ['Style', '', 'sub'], ['&Właściwości...'],
  ],
  vector: [['Narzędzia &geoprocesingu', '', 'sub sel'], ['Narzędzia g&eometrii', '', 'sub'], ['Narzędzia &analizy', '', 'sub'], ['Narzędzia &badawcze', '', 'sub'], ['Narzędzia zarządzania &danymi', '', 'sub']],
  geo: [['Bufor...', 'bufor'], ['Przytnij...', 'clip'], ['Otoczka wypukła...', 'hull'], ['Różnica...', 'diff'], ['Agreguj...', 'dissolve'], ['Iloczyn...', 'clip'], ['Różnica symetryczna...', 'symdiff'], ['Suma...', 'union'], ['Eliminuj wybrane poligony...', 'dissolve']],
};
document.querySelectorAll('[data-menu]').forEach((el) => {
  el.innerHTML = menus[el.dataset.menu].map((m, i) => {
    if (!m) return '<hr>';
    const [label, ic, flags = ''] = m;
    const sel = el.dataset.selected === String(i) ? 'sel' : '';
    const size = ic ? (flags === 'short' ? '' : 'tall') : 'plain';
    return `<div class="mi ${size} ${flags} ${sel}">${ic ? icon(ic, 19) : ''}<span>${accel(label)}</span>${flags.includes('sub') ? '<b class="tri-right"></b>' : ''}</div>`;
  }).join('');
});

/* ---- point layers ---- */
document.querySelectorAll('[data-points]').forEach((g) => {
  g.innerHTML = g.dataset.points.split(' ').map((p) => {
    const [x, y] = p.split(',');
    return `<circle cx="${x}" cy="${y}" r="4.700"/>`;
  }).join('');
});

/* ---- river buffers: overlapping discs, southern ones on top ---- */
let seed = 7;
const rnd = () => (seed = (seed * 16807) % 2147483647) / 2147483647;
const inside = (x, y, poly) => {
  let hit = false;
  for (let i = 0, j = poly.length - 1; i < poly.length; j = i++) {
    const [xi, yi] = poly[i], [xj, yj] = poly[j];
    if ((yi > y) !== (yj > y) && x < ((xj - xi) * (y - yi)) / (yj - yi) + xi) hit = !hit;
  }
  return hit;
};
const scatter = (poly, n, edge) => {
  const xs = poly.map((p) => p[0]), ys = poly.map((p) => p[1]);
  const x0 = Math.min(...xs), x1 = Math.max(...xs), y0 = Math.min(...ys), y1 = Math.max(...ys);
  const out = [...edge];
  while (n > 0) {
    const x = x0 + rnd() * (x1 - x0), y = y0 + rnd() * (y1 - y0);
    if (!inside(x, y, poly)) continue;
    n--;
    const copies = rnd() < 0.11 ? 9 : rnd() < 0.25 ? 3 : 1;
    const r = 47 + rnd() * 3, dx = rnd() * 2 - 1;
    for (let k = 0; k < copies; k++) out.push([x + k * dx, y + k * 1.4, r]);
  }
  return out.sort((a, b) => a[1] - b[1]);
};
const west = scatter(
  [[470, 2085], [518, 2078], [600, 2092], [640, 2125], [700, 2103], [745, 2115], [740, 2420], [700, 2440], [660, 2455], [600, 2475], [530, 2470], [500, 2450], [490, 2410], [470, 2340], [520, 2310], [530, 2240], [470, 2195], [430, 2178], [425, 2166], [480, 2140], [470, 2110]],
  340,
  [[462, 2074, 50], [470, 2080, 50], [489, 2086, 50], [495, 2088, 50], [518, 2074, 50], [557, 2084, 50], [570, 2086, 50], [600, 2092, 49], [690, 2101, 50], [387, 2172, 50], [389, 2175, 50], [410, 2172, 50], [422, 2161, 50], [432, 2164, 50], [400, 2226, 51], [401, 2230, 50], [428, 2233, 51], [478, 2243, 51], [508, 2255, 51], [453, 2335, 50], [462, 2342, 50], [470, 2352, 50], [456, 2372, 50], [452, 2377, 50], [408, 2371, 50], [409, 2375, 50], [408, 2379, 50], [408, 2385, 50], [432, 2411, 48], [484, 2440, 50], [462, 2463, 51], [465, 2465, 51], [469, 2467, 51], [473, 2470, 50], [477, 2473, 50], [469, 2519, 48], [497, 2521, 48], [498, 2523, 48], [499, 2525, 48], [530, 2529, 49]]);
const east = scatter(
  [[765, 2110], [783, 2103], [830, 2093], [930, 2085], [930, 2400], [860, 2380], [790, 2370], [765, 2350], [770, 2290], [760, 2240], [760, 2180]],
  140,
  [[783, 2100, 49], [780, 2104, 50], [830, 2095, 50], [859, 2082, 50], [745, 2190, 50], [747, 2194, 50], [751, 2240, 50], [754, 2255, 50], [757, 2290, 50], [757, 2380, 50], [758, 2384, 50], [760, 2389, 50], [763, 2393, 50], [772, 2408, 47], [862, 2406, 47], [863, 2410, 47], [895, 2415, 45]]);
const south = [
  [790, 2460, 45], [664, 2485, 47], [660, 2489, 47], [733, 2492, 50], [731, 2492, 49.5], [729, 2493, 49], [720, 2494, 48], [663, 2489, 47], [658, 2493, 47],
  [650, 2543, 49], [647, 2546, 49], [644, 2550, 49], [594, 2553, 52], [610, 2593, 46], [564, 2593, 48], [574, 2622, 50], [563, 2627, 48], [528, 2647, 47], [503, 2651, 45],
  [935, 2457, 45], [1108, 2453, 48], [1197, 2490, 47], [1195, 2492, 47], [1193, 2494, 48], [1290, 2562, 46], [1292, 2563, 46], [1296, 2566, 46], [1299, 2567, 46], [1302, 2568, 46], [1314, 2571, 48],
];
document.getElementById('buffers').innerHTML = [...west, ...east, ...south]
  .map(([x, y, r]) => `<circle cx="${x.toFixed(1)}" cy="${y.toFixed(1)}" r="${r.toFixed(1)}"/>`).join('');
```
